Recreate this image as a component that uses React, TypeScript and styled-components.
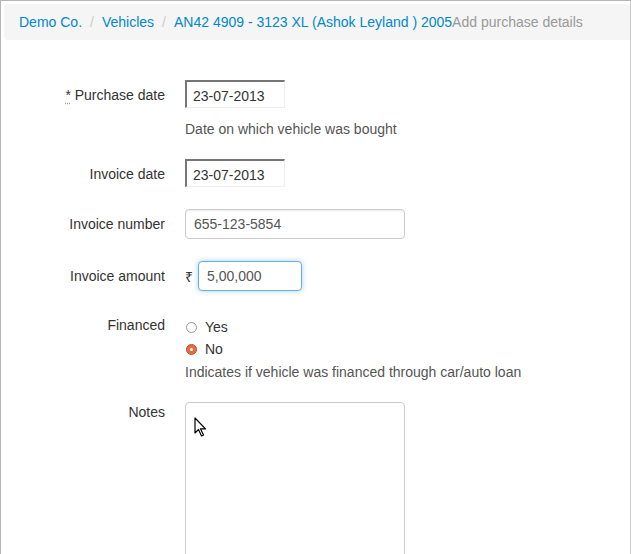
import React from "react"
import styled, { createGlobalStyle } from "styled-components"

const Global = createGlobalStyle`
  html, body { margin: 0; padding: 0; background: #fff; }
  body { font-family: "Liberation Sans", Arial, sans-serif; font-size: 14px; color: #333; }
`

const Frame = styled.div`
  width: 631px;
  height: 554px;
  box-sizing: border-box;
  border-left: 1px solid #b5b5b5;
  border-top: 1px solid #b5b5b5;
  border-right: 1px solid #c8c8c8;
  padding: 3px 0 0 3px;
  overflow: hidden;
  position: relative;
`

const Crumbs = styled.ol`
  list-style: none;
  margin: 0;
  padding: 0 0 0 15px;
  height: 36px;
  display: flex;
  align-items: center;
  background: #f5f5f5;
  border-radius: 4px 0 0 4px;
  font-size: 14px;
  white-space: nowrap;
`

const Crumb = styled.li<{ $active?: boolean }>`
  color: ${p => (p.$active ? "#999" : "#0088cc")};
  & + &::before {
    content: "/";
    color: #ccc;
    padding: 0 8px;
  }
`

const Form = styled.div`
  padding-top: 40px;
  display: flex;
  flex-direction: column;
  gap: 22px;
`

const Row = styled.div`
  display: grid;
  grid-template-columns: 161px 1fr;
  column-gap: 20px;
`

const Label = styled.label`
  text-align: right;
  padding-top: 7px;
  color: #333;
`

const Req = styled.abbr`
  text-decoration: underline dotted #999;
  text-underline-offset: 3px;
`

const Field = styled.div`
  display: flex;
  flex-direction: column;
  gap: 0;
`

const Help = styled.p`
  margin: 13px 0 0;
  color: #555;
`

const DateInput = styled.input`
  width: 100px;
  height: 28px;
  box-sizing: border-box;
  border: none;
  border-top: 2px solid #767676;
  border-left: 2px solid #767676;
  border-right: 1px solid #eee;
  border-bottom: 1px solid #eee;
  padding: 2px 0 0 6px;
  font: inherit;
  color: #333;
`

const TextInput = styled.input<{ $w: number; $focus?: boolean }>`
  width: ${p => p.$w}px;
  height: ${p => (p.$focus ? 30 : 30)}px;
  box-sizing: border-box;
  border: 1px solid ${p => (p.$focus ? "#66afe9" : "#ccc")};
  border-radius: 4px;
  box-shadow: ${p => (p.$focus ? "0 0 5px rgba(102,175,233,.6)" : "inset 0 1px 1px rgba(0,0,0,.075)")};
  padding: 0 8px;
  font: inherit;
  color: #555;
  outline: none;
`

const Amount = styled.div`
  display: flex;
  align-items: center;
  gap: 5px;
`

const Radios = styled.div`
  display: flex;
  flex-direction: column;
  gap: 6px;
  padding-top: 6px;
`

const RadioRow = styled.div`
  display: flex;
  align-items: center;
  gap: 8px;
  padding-left: 1px;
`

const Radio = styled.span<{ $on?: boolean }>`
  width: 11px;
  height: 11px;
  border-radius: 50%;
  box-sizing: border-box;
  border: 1px solid ${p => (p.$on ? "#c0502a" : "#999")};
  background: ${p => (p.$on ? "#e96a45" : "#fff")};
  display: inline-flex;
  align-items: center;
  justify-content: center;
  &::after {
    content: "";
    width: 3px;
    height: 3px;
    border-radius: 50%;
    background: ${p => (p.$on ? "#fff" : "transparent")};
  }
`

const Notes = styled.textarea`
  width: 220px;
  height: 170px;
  box-sizing: border-box;
  border: 1px solid #ccc;
  border-radius: 4px;
  resize: none;
`

const Pointer = styled.svg`
  position: absolute;
  left: 193px;
  top: 416px;
`

export default function App() {
  return (
    <>
      <Global />
      <Frame>
        <Crumbs>
          <Crumb>Demo Co.</Crumb>
          <Crumb>Vehicles</Crumb>
          <Crumb>AN42 4909 - 3123 XL (Ashok Leyland ) 2005</Crumb>
          <Crumb $active>Add purchase details</Crumb>
        </Crumbs>
        <Form>
          <Row>
            <Label><Req>*</Req> Purchase date</Label>
            <Field>
              <DateInput defaultValue="23-07-2013" />
              <Help>Date on which vehicle was bought</Help>
            </Field>
          </Row>
          <Row>
            <Label>Invoice date</Label>
            <Field><DateInput defaultValue="23-07-2013" /></Field>
          </Row>
          <Row>
            <Label>Invoice number</Label>
            <Field><TextInput $w={220} defaultValue="655-123-5854" /></Field>
          </Row>
          <Row>
            <Label>Invoice amount</Label>
            <Amount>
              <span>₹</span>
              <TextInput $w={104} $focus defaultValue="5,00,000" />
            </Amount>
          </Row>
          <Row>
            <Label style={{ paddingTop: 4 }}>Financed</Label>
            <Field>
              <Radios>
                <RadioRow><Radio />Yes</RadioRow>
                <RadioRow><Radio $on />No</RadioRow>
              </Radios>
              <Help style={{ marginTop: 7 }}>Indicates if vehicle was financed through car/auto loan</Help>
            </Field>
          </Row>
          <Row>
            <Label style={{ paddingTop: 2 }}>Notes</Label>
            <Field><Notes /></Field>
          </Row>
        </Form>
        <Pointer width="14" height="20" viewBox="0 0 14 20">
          <path d="M1 1 L1 16 L4.5 12.5 L7.5 19 L9.5 18 L6.5 11.8 L11.5 11.8 Z" fill="#fff" stroke="#000" strokeWidth="1.2" strokeLinejoin="round" />
        </Pointer>
      </Frame>
    </>
  )
}
